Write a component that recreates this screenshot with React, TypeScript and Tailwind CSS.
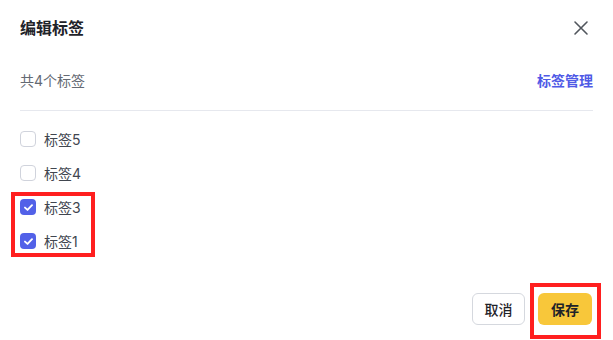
import React from "react";

const font = "font-['Inter','Noto_Sans_CJK_SC',sans-serif]";

function Check({ checked }: { checked: boolean }) {
  if (checked) {
    return (
      <span className="flex h-4 w-4 items-center justify-center rounded-[4px] bg-[#5261e8]">
        <svg width="11" height="11" viewBox="0 0 10 10" fill="none">
          <path d="M1.8 5.1 L4.1 7.2 L8.2 2.9" stroke="white" strokeWidth="1.7" strokeLinecap="round" strokeLinejoin="round" />
        </svg>
      </span>
    );
  }
  return <span className="h-4 w-4 rounded-[4px] border border-[#d0d3dc] bg-white" />;
}

export default function App() {
  const tags = [
    { name: "标签5", checked: false },
    { name: "标签4", checked: false },
    { name: "标签3", checked: true },
    { name: "标签1", checked: true },
  ];
  return (
    <div className={`relative h-[340px] w-[613px] overflow-hidden bg-white ${font}`}>
      <div className="flex items-center justify-between pl-5 pr-[24px] pt-4">
        <div className="text-[16px] font-semibold leading-6 text-[#1f2329]">编辑标签</div>
        <svg width="16" height="16" viewBox="0 0 16 16" fill="none">
          <path d="M2 2 L14 14 M14 2 L2 14" stroke="#51565d" strokeWidth="1.6" strokeLinecap="round" />
        </svg>
      </div>
      <div className="mx-5 mt-[29px] flex h-[22px] items-center justify-between text-[14px]">
        <span className="text-[#646a73]">共4个标签</span>
        <span className="font-semibold text-[#4f5ae6]">标签管理</span>
      </div>
      <div className="mx-5 mt-[19px] border-t border-[#e6e8ee]" />
      <div className="px-5 pt-[11px]">
        {tags.map((t) => (
          <div key={t.name} className="flex h-[34px] items-center gap-2">
            <Check checked={t.checked} />
            <span className="text-[14px] text-[#41464f]">{t.name}</span>
          </div>
        ))}
      </div>
      <div className="mt-[35px] flex justify-end gap-[13px] px-[21px]">
        <button className="flex h-8 w-[53px] items-center justify-center rounded-[6px] border border-[#d5d8de] bg-white text-[14px] font-medium text-[#1f2329]">
          取消
        </button>
        <button className="flex h-8 w-[54px] items-center justify-center rounded-[6px] bg-[#f8c73a] text-[14px] font-semibold text-[#1f2329]">
          保存
        </button>
      </div>
      <div className="pointer-events-none absolute left-[11px] top-[192px] h-[65px] w-[84px] border-4 border-[#ff1f1f]" />
      <div className="pointer-events-none absolute left-[530px] top-[283px] h-[56px] w-[71px] border-4 border-[#ff1f1f]" />
    </div>
  );
}
